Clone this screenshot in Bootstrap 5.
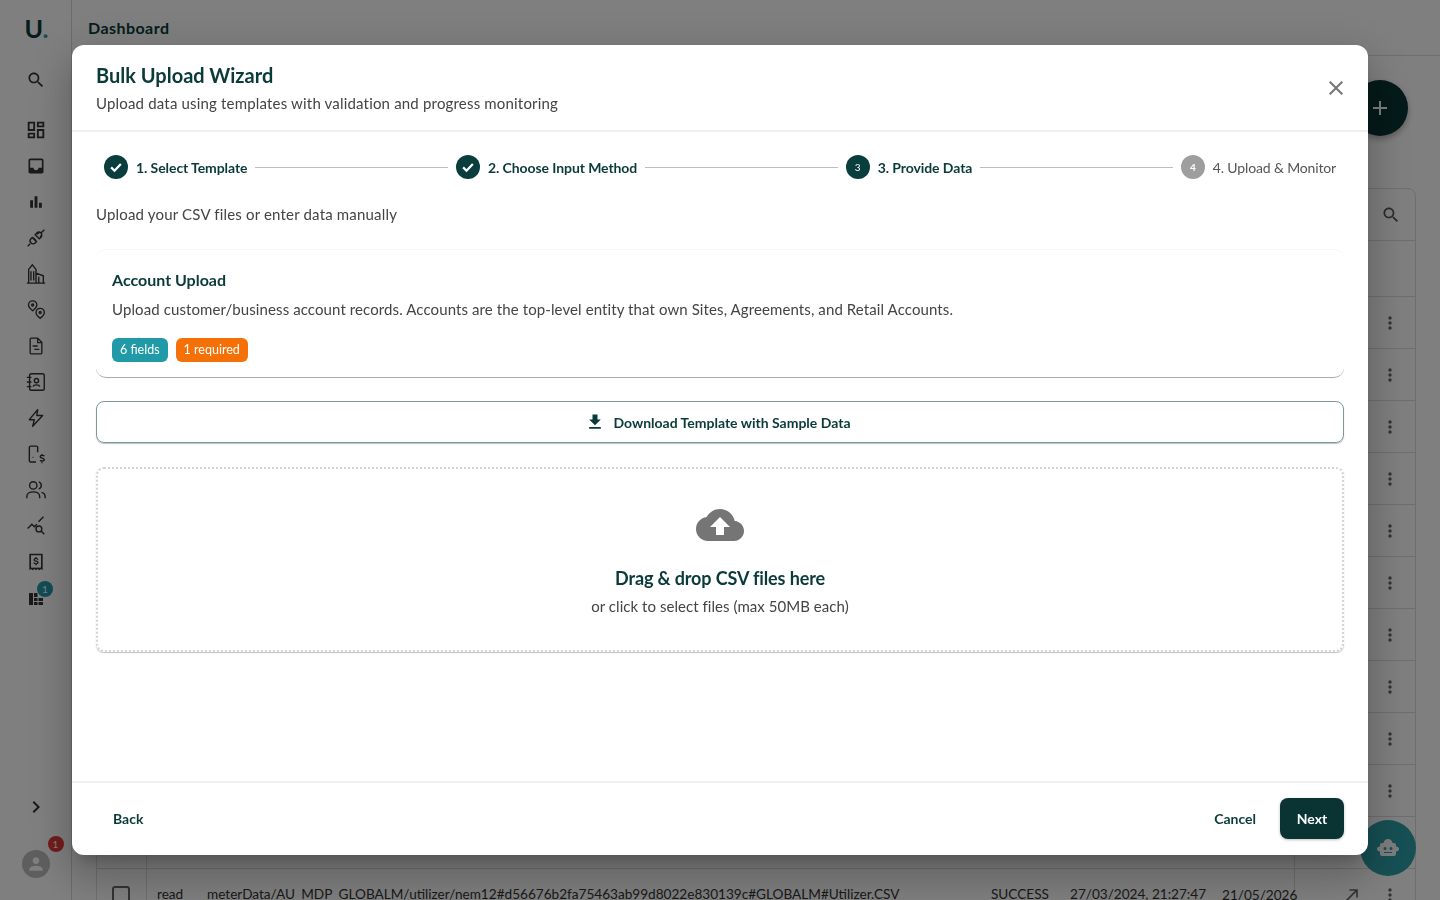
<!DOCTYPE html>
<html lang="en">

<head>
    <meta charset="UTF-8">
    <meta name="viewport" content="width=device-width, initial-scale=1.0">
    <title>Bulk Upload Wizard</title>

    <link href="https://cdn.jsdelivr.net/npm/bootstrap@5.3.0/dist/css/bootstrap.min.css" rel="stylesheet">
    <style>
        html, body { height: 100%; overflow: hidden; }
        body { font-family: "Lato", "Liberation Sans", sans-serif; color: #3f3f3f; background: #fff; font-size: 15px; }
        svg { fill: currentColor; display: block; flex: none; }

        /* page behind the dialog */
        .side-rail { width: 72px; height: 900px; flex: none; border-right: 1px solid #d8d8d8; color: #333; }
        .rail-logo { height: 56px; padding-left: 2px; font-size: 25px; font-weight: 700; color: #0a3a3a; line-height: 56px; }
        .rail-logo span { color: #2a9aa0; }
        .rail-btn { height: 36px; position: relative; }
        .rail-search { height: 24px; margin: 14px 0 18px; }
        .rail-foot { margin-top: auto; padding-bottom: 22px; }
        .rail-count { position: absolute; top: 1px; left: 37px; width: 16px; height: 16px; border-radius: 50%; background: #1f9aa6; color: #fff; font-size: 10px; line-height: 16px; text-align: center; }
        .user-dot { width: 28px; height: 28px; border-radius: 50%; background: #bdbdbd; color: #fff; position: relative; margin: 31px auto 0; }
        .user-count { position: absolute; top: -14px; left: 26px; width: 16px; height: 16px; border-radius: 50%; background: #e53935; color: #fff; font-size: 10px; line-height: 16px; text-align: center; }
        .page-main { min-width: 0; position: relative; }
        .page-head { height: 56px; padding: 0 16px; border-bottom: 1px solid #ddd; font-size: 16px; font-weight: 700; letter-spacing: .45px; color: #0a3a3a; }
        .fab-add { position: absolute; top: 80px; left: 1280px; width: 56px; height: 56px; border-radius: 50%; background: #0a3434; color: #fff; box-shadow: 0 3px 6px rgba(0,0,0,.3); }
        .fab-bot { position: fixed; top: 820px; left: 1360px; width: 56px; height: 56px; border-radius: 50%; background: #2ea3ab; color: #fff; z-index: 10; }
        .data-panel { margin: 132px 0 0 24px; width: 1320px; border: 1px solid #ddd; border-radius: 8px 8px 0 0; }
        .panel-tools { height: 52px; padding-right: 14px; color: #555; border-bottom: 1px solid #ddd; }
        .panel-cols { height: 56px; border-bottom: 1px solid #ddd; }
        .data-row { height: 52px; border-bottom: 1px solid #ddd; color: #333; font-size: 13.6px; white-space: nowrap; }
        .data-row > div { flex: none; }
        .cell-check { width: 50px; height: 100%; border-right: 1px solid #ddd; }
        .check-box { width: 18px; height: 18px; border: 2px solid #666; border-radius: 3px; margin: 17px 0 0 15px; }
        .cell-type { width: 50px; margin-left: 10px; }
        .cell-path { width: 784px; overflow: hidden; }
        .cell-state { width: 79px; }
        .cell-date { width: 152px; }
        .cell-date-end { width: 73px; height: 100%; line-height: 52px; border-right: 1px solid #ddd; }
        .cell-open { width: 67px; padding-left: 47px; color: #666; }
        .cell-more { margin-left: 18px; color: #666; }

        /* dialog */
        .wizard-dialog { width: 1296px; max-width: 1296px; margin: 45px auto 0; }
        .wizard-dialog .modal-content { height: 810px; border: 0; border-radius: 12px; box-shadow: 0 11px 15px -7px rgba(0,0,0,.2), 0 24px 38px 3px rgba(0,0,0,.14), 0 9px 46px 8px rgba(0,0,0,.12); }
        .wizard-head { height: 87px; padding: 18px 24px 0; border-bottom: 2px solid #f0f0f0; align-items: flex-start; }
        .wizard-title { font-size: 20px; font-weight: 700; line-height: 24px; color: #0a3a3a; margin: 0 0 5px; }
        .wizard-sub { font-size: 15px; line-height: 22px; letter-spacing: .18px; color: #444; margin: 0; }
        .wizard-close { border: 0; background: none; padding: 0; color: #757575; position: absolute; top: 31px; right: 20px; }
        .wizard-body { padding: 23px 24px 0; overflow: hidden; }
        .step-item { padding: 0 8px; font-size: 14px; font-weight: 700; letter-spacing: -.08px; color: #0a3a3a; white-space: nowrap; }
        .step-item.step-todo { color: #555; font-weight: 400; letter-spacing: -.15px; }
        .step-dot { width: 24px; height: 24px; border-radius: 50%; background: #0a3d3d; color: #fff; font-size: 10px; font-weight: 400; }
        .step-dot svg { fill: none; stroke: #fff; stroke-width: 3; }
        .step-todo .step-dot { background: #9e9e9e; font-weight: 700; }
        .step-line { height: 1px; background: #bdbdbd; }
        .wizard-lead { margin: 24px 0 24px; line-height: 22px; letter-spacing: .18px; color: #444; }
        .tpl-card { height: 129px; padding: 19px 16px 0; border-radius: 10px; border-bottom: 1px solid #a3adad; border-top: 1px solid #f6f6f6; box-shadow: 0 0 1px rgba(0,0,0,.05); }
        .tpl-name { font-size: 16px; font-weight: 700; line-height: 22px; color: #0a3a3a; margin: 0 0 7px; }
        .tpl-text { line-height: 22px; letter-spacing: .1px; color: #444; margin: 0 0 18px; }
        .tpl-tag { height: 24px; padding: 0 8px; border-radius: 6px; color: #fff; font-size: 12.5px; font-weight: 400; line-height: 24px; }
        .tag-fields { background: #1f9aa6; }
        .tag-required { background: #f57107; }
        .get-template { height: 42px; margin-top: 23px; padding-right: 16px; border: 1px solid #7f9797; border-radius: 8px; color: #0a3a3a; font-size: 14px; font-weight: 700; box-shadow: 0 1px 1px rgba(90,120,120,.45); }
        .get-template:hover { color: #0a3a3a; border-color: #7f9797; }
        .drop-zone { height: 185px; margin-top: 24px; padding-bottom: 2px; border: 2px dotted #d4d4d4; border-radius: 8px; color: #757575; box-shadow: 0 1px 1px rgba(0,0,0,.25); }
        .drop-title { font-size: 18px; font-weight: 700; line-height: 24px; letter-spacing: -.12px; color: #0a3a3a; margin: 17px 0 5px; }
        .drop-note { line-height: 22px; letter-spacing: .05px; color: #444; margin: 0; }
        .wizard-foot { height: 74px; padding: 0 24px 2px; border-top: 2px solid #f0f0f0; }
        .wizard-foot > * { margin: 0; }
        .foot-link { padding: 0 17px; font-size: 14px; font-weight: 700; color: #0a3a3a; border: 0; }
        .foot-link:hover { color: #0a3a3a; }
        .foot-next { height: 41px; width: 64px; padding: 0; margin-left: 7px; border-radius: 8px; border: 0; background: #0a3434; color: #fff; font-size: 14px; font-weight: 700; box-shadow: 0 1px 3px rgba(0,0,0,.25); }
        .foot-next:hover { background: #0a3434; color: #fff; }
    </style>
</head>

<body>
    <div class="d-flex">
        <!-- left rail -->
        <nav class="side-rail d-flex flex-column text-center">
            <div class="rail-logo">U<span>.</span></div>
            <div class="rail-search d-flex justify-content-center"><svg width="20" height="20" viewBox="0 0 24 24"><path d="M15.5 14h-.79l-.28-.27C15.41 12.59 16 11.11 16 9.5 16 5.91 13.09 3 9.5 3S3 5.91 3 9.5 5.91 16 9.5 16c1.61 0 3.09-.59 4.23-1.57l.27.28v.79l5 4.99L20.49 19l-4.99-5zm-6 0C7.01 14 5 11.99 5 9.5S7.01 5 9.5 5 14 7.01 14 9.5 11.99 14 9.5 14z"/></svg></div>
            <div class="rail-btn d-flex align-items-center justify-content-center"><svg width="22" height="22" viewBox="0 0 24 24"><path d="M19 5v2h-4V5h4M9 5v6H5V5h4m10 8v6h-4v-6h4M9 17v2H5v-2h4M21 3h-8v6h8V3zM11 3H3v10h8V3zm10 8h-8v10h8V11zm-10 4H3v6h8v-6z"/></svg></div>
            <div class="rail-btn d-flex align-items-center justify-content-center"><svg width="20" height="20" viewBox="0 0 24 24"><path d="M19 3H5c-1.1 0-2 .9-2 2v14c0 1.1.9 2 2 2h14c1.1 0 2-.9 2-2V5c0-1.1-.9-2-2-2zm0 2v9h-4c0 1.66-1.35 3-3 3s-3-1.34-3-3H5V5h14z"/></svg></div>
            <div class="rail-btn d-flex align-items-center justify-content-center"><svg width="20" height="20" viewBox="0 0 24 24"><path d="M5 10h3.4v9H5zM10.3 5h3.4v14h-3.4zM15.6 13H19v6h-3.4z"/></svg></div>
            <div class="rail-btn d-flex align-items-center justify-content-center"><svg width="20" height="20" viewBox="0 0 24 24" style="fill:none;stroke:currentColor;stroke-width:1.7"><path d="M2 22l3-3M8.5 11.5l4 4M6 13a3.5 3.5 0 1 0 5 5l1.5-1.5-5-5zM11 8l5 5 2-2a3.5 3.5 0 0 0-5-5zM18 6l4-4M13.5 7.5L16 5M17 10.5l2.5-2.5"/></svg></div>
            <div class="rail-btn d-flex align-items-center justify-content-center"><svg width="22" height="22" viewBox="0 0 24 24" style="fill:none;stroke:currentColor;stroke-width:1.5"><path d="M2 22h20M4 22V7l4-5 4 5v15M12 11l8 3v8M6.5 9v10M9.5 9v10M15 15v7"/></svg></div>
            <div class="rail-btn d-flex align-items-center justify-content-center"><svg width="20" height="20" viewBox="0 0 24 24" style="fill:none;stroke:currentColor;stroke-width:1.6"><path d="M8 13S3 8.8 3 6a5 5 0 0 1 10 0c0 2.8-5 7-5 7zM17 22s-5-4-5-7a5 5 0 0 1 10 0c0 3-5 7-5 7z"/><circle cx="8" cy="6" r="1.2"/><circle cx="17" cy="15" r="1.2"/></svg></div>
            <div class="rail-btn d-flex align-items-center justify-content-center"><svg width="20" height="20" viewBox="0 0 24 24" style="fill:none;stroke:currentColor;stroke-width:1.6"><path d="M6 2.5h8l5 5V20a1.5 1.5 0 0 1-1.5 1.5h-11A1.5 1.5 0 0 1 5 20V4a1.5 1.5 0 0 1 1-1.5zM14 3v5h5M8 12h6M10 16h6"/></svg></div>
            <div class="rail-btn d-flex align-items-center justify-content-center"><svg width="22" height="22" viewBox="0 0 24 24" style="fill:none;stroke:currentColor;stroke-width:1.5"><rect x="5" y="3" width="16" height="18" rx="2"/><path d="M2 7h5M2 12h5M2 17h5M9 17c.5-2.5 6.5-2.5 7 0"/><circle cx="12.5" cy="10.5" r="2.3"/></svg></div>
            <div class="rail-btn d-flex align-items-center justify-content-center"><svg width="20" height="20" viewBox="0 0 24 24" style="fill:none;stroke:currentColor;stroke-width:1.7;stroke-linejoin:round"><path d="M14 2L4 14h6l-2 8 12-13h-7z"/></svg></div>
            <div class="rail-btn d-flex align-items-center justify-content-center"><svg width="20" height="20" viewBox="0 0 24 24" style="fill:none;stroke:currentColor;stroke-width:1.7"><path d="M14 10V4a1.5 1.5 0 0 0-1.5-1.5h-7A1.5 1.5 0 0 0 4 4v16a1.5 1.5 0 0 0 1.5 1.5H12M8 16h1M19 12v1M19 22v1M22 14.5c-1-1.2-5-1.2-5 .8s5 1.3 5 3.4-4 2-5 .8"/></svg></div>
            <div class="rail-btn d-flex align-items-center justify-content-center"><svg width="22" height="22" viewBox="0 0 24 24" style="fill:none;stroke:currentColor;stroke-width:1.5"><circle cx="9" cy="7" r="4"/><path d="M2 21v-2c0-3 3-5 7-5s7 2 7 5v2M15 3.2a4 4 0 0 1 0 7.6M18 14.5c2.4.7 4 2.3 4 4.5v2"/></svg></div>
            <div class="rail-btn d-flex align-items-center justify-content-center"><svg width="20" height="20" viewBox="0 0 24 24" style="fill:none;stroke:currentColor;stroke-width:1.7"><path d="M2 15l5-5 3 3 3-3M15 7l6-6"/><circle cx="15.5" cy="15.5" r="3.5"/><path d="M18 18l4 4"/></svg></div>
            <div class="rail-btn d-flex align-items-center justify-content-center"><svg width="20" height="20" viewBox="0 0 24 24"><path d="M4 2h16v20l-2-1.5-2 1.5-2-1.5-2 1.5-2-1.5L8 22l-2-1.5L4 22zm2 2v14.5l2 .5 2-.5 2 .5 2-.5 2 .5 2-.5V4z"/><path d="M11.2 6h1.6v1.3c1.2.2 2 .9 2.2 2h-1.6c-.2-.5-.6-.8-1.4-.8s-1.3.3-1.3.8c0 .5.5.7 1.700 1 1.500.4 2.800.9 2.800 2.400 0 1.100-.9 1.900-2.400 2.100V16h-1.600v-1.200c-1.300-.2-2.300-1-2.400-2.200h1.600c.1.600.7 1 1.600 1 1 0 1.500-.4 1.500-.9 0-.6-.6-.8-1.800-1.100-1.400-.4-2.700-.9-2.700-2.300 0-1.100.9-1.800 2.200-2z"/></svg></div>
            <div class="rail-btn d-flex align-items-center justify-content-center"><svg width="18" height="18" viewBox="0 0 18 18"><path d="M2 4h4v12H2zM7 4h3.500v4H7zM7 9h3.500v3H7zM7 13h3.500v3H7zM11.500 9H16v3h-4.500zM11.500 13H16v3h-4.500z"/></svg><span class="rail-count">1</span></div>
            <div class="rail-foot">
                <div class="d-flex justify-content-center"><svg width="24" height="24" viewBox="0 0 24 24"><path d="M10 6L8.59 7.41 13.17 12l-4.58 4.59L10 18l6-6z"/></svg></div>
                <div class="user-dot d-flex align-items-center justify-content-center"><svg width="20" height="20" viewBox="0 0 24 24"><path d="M12 12c2.21 0 4-1.79 4-4s-1.79-4-4-4-4 1.79-4 4 1.79 4 4 4zm0 2c-2.67 0-8 1.34-8 4v2h16v-2c0-2.66-5.33-4-8-4z"/></svg><span class="user-count">1</span></div>
            </div>
        </nav>

        <!-- page content, dimmed by the backdrop -->
        <main class="page-main flex-grow-1">
            <div class="page-head d-flex align-items-center">Dashboard</div>
            <div class="fab-add d-flex align-items-center justify-content-center"><svg width="24" height="24" viewBox="0 0 24 24"><path d="M19 13h-6v6h-2v-6H5v-2h6V5h2v6h6v2z"/></svg></div>
            <div class="data-panel">
                <div class="panel-tools d-flex align-items-center justify-content-end"><svg width="20" height="20" viewBox="0 0 24 24"><path d="M15.5 14h-.79l-.28-.27C15.41 12.59 16 11.11 16 9.5 16 5.91 13.09 3 9.5 3S3 5.91 3 9.5 5.91 16 9.5 16c1.61 0 3.09-.59 4.23-1.57l.27.28v.79l5 4.99L20.49 19l-4.99-5zm-6 0C7.01 14 5 11.99 5 9.5S7.01 5 9.5 5 14 7.01 14 9.5 11.99 14 9.5 14z"/></svg></div>
                <div class="panel-cols"></div>
                <div id="rows"></div>
            </div>
        </main>
    </div>
    <div class="fab-bot d-flex align-items-center justify-content-center"><svg width="24" height="24" viewBox="0 0 24 24"><path d="M20 10.5V9c0-1.1-.9-2-2-2h-1.500C16 4.500 14.300 3 12 3S8 4.500 7.500 7H6c-1.100 0-2 .9-2 2v1.500c-1.660 0-3 .9-3 2.500s1.340 2.500 3 2.500V18c0 1.100.9 2 2 2h12c1.100 0 2-.9 2-2v-2.500c1.660 0 3-.9 3-2.500s-1.340-2.500-3-2.500zM9 14a1.500 1.500 0 1 1 0-3 1.500 1.500 0 0 1 0 3zm7 3H8v-1h8zm-1-3a1.500 1.500 0 1 1 0-3 1.500 1.500 0 0 1 0 3z"/></svg></div>

    <div class="modal-backdrop show"></div>

    <!-- wizard dialog -->
    <div class="modal d-block" tabindex="-1">
        <div class="modal-dialog wizard-dialog">
            <div class="modal-content">
                <div class="modal-header wizard-head d-block">
                    <h5 class="wizard-title">Bulk Upload Wizard</h5>
                    <p class="wizard-sub">Upload data using templates with validation and progress monitoring</p>
                    <button type="button" class="wizard-close" aria-label="Close"><svg width="24" height="24" viewBox="0 0 24 24"><path d="M19 6.41L17.59 5 12 10.59 6.41 5 5 6.41 10.59 12 5 17.59 6.41 19 12 13.41 17.59 19 19 17.59 13.41 12z"/></svg></button>
                </div>
                <div class="modal-body wizard-body">
                    <div class="d-flex align-items-center">
                        <div class="step-item d-flex align-items-center gap-2"><span class="step-dot d-flex align-items-center justify-content-center"><svg width="18" height="18" viewBox="0 0 24 24"><path d="M5.5 12.5l4.5 4.5 8.5-9"/></svg></span>1. Select Template</div>
                        <div class="step-line flex-grow-1"></div>
                        <div class="step-item d-flex align-items-center gap-2"><span class="step-dot d-flex align-items-center justify-content-center"><svg width="18" height="18" viewBox="0 0 24 24"><path d="M5.5 12.5l4.5 4.5 8.5-9"/></svg></span>2. Choose Input Method</div>
                        <div class="step-line flex-grow-1"></div>
                        <div class="step-item d-flex align-items-center gap-2"><span class="step-dot d-flex align-items-center justify-content-center">3</span>3. Provide Data</div>
                        <div class="step-line flex-grow-1"></div>
                        <div class="step-item step-todo d-flex align-items-center gap-2"><span class="step-dot d-flex align-items-center justify-content-center">4</span>4. Upload &amp; Monitor</div>
                    </div>
                    <p class="wizard-lead">Upload your CSV files or enter data manually</p>
                    <div class="tpl-card">
                        <h6 class="tpl-name">Account Upload</h6>
                        <p class="tpl-text">Upload customer/business account records. Accounts are the top-level entity that own Sites, Agreements, and Retail Accounts.</p>
                        <div class="d-flex gap-2">
                            <span class="tpl-tag tag-fields">6 fields</span>
                            <span class="tpl-tag tag-required">1 required</span>
                        </div>
                    </div>
                    <button type="button" class="btn get-template w-100 d-flex align-items-center justify-content-center gap-2"><svg width="20" height="20" viewBox="0 0 24 24"><path d="M19 9h-4V3H9v6H5l7 7 7-7zM5 18v2h14v-2H5z"/></svg>Download Template with Sample Data</button>
                    <div class="drop-zone d-flex flex-column align-items-center justify-content-center">
                        <svg width="48" height="48" viewBox="0 0 24 24"><path d="M19.35 10.04C18.67 6.59 15.64 4 12 4 9.11 4 6.6 5.64 5.35 8.04 2.34 8.36 0 10.91 0 14c0 3.31 2.69 6 6 6h13c2.76 0 5-2.24 5-5 0-2.64-2.05-4.78-4.65-4.96zM14 13v4h-4v-4H7l5-5 5 5h-3z"/></svg>
                        <h6 class="drop-title">Drag &amp; drop CSV files here</h6>
                        <p class="drop-note">or click to select files (max 50MB each)</p>
                    </div>
                </div>
                <div class="modal-footer wizard-foot d-flex align-items-center justify-content-between">
                    <button type="button" class="btn foot-link">Back</button>
                    <div class="d-flex align-items-center">
                        <button type="button" class="btn foot-link">Cancel</button>
                        <button type="button" class="btn foot-next">Next</button>
                    </div>
                </div>
            </div>
        </div>
    </div>

    <script src="https://cdn.jsdelivr.net/npm/bootstrap@5.3.0/dist/js/bootstrap.bundle.min.js"></script>
    <script>
        // table rows behind the dialog, only the right edge and last row show
        let html = "";
        for (let i = 0; i < 12; i++) {
            html += '<div class="data-row d-flex align-items-center">' +
                '<div class="cell-check"><div class="check-box"></div></div>' +
                '<div class="cell-type">read</div>' +
                '<div class="cell-path">meterData/AU_MDP_GLOBALM/utilizer/nem12#d56676b2fa75463ab99d8022e830139c#GLOBALM#Utilizer.CSV</div>' +
                '<div class="cell-state">SUCCESS</div>' +
                '<div class="cell-date">27/03/2024, 21:27:47</div>' +
                '<div class="cell-date-end">21/05/2026</div>' +
                '<div class="cell-open"><svg width="20" height="20" viewBox="0 0 24 24"><path d="M9 5v2h6.59L4 18.59 5.41 20 17 8.41V15h2V5z"/></svg></div>' +
                '<div class="cell-more"><svg width="20" height="20" viewBox="0 0 24 24"><path d="M12 8c1.1 0 2-.9 2-2s-.9-2-2-2-2 .9-2 2 .9 2 2 2zm0 2c-1.1 0-2 .9-2 2s.9 2 2 2 2-.9 2-2-.9-2-2-2zm0 6c-1.1 0-2 .9-2 2s.9 2 2 2 2-.9 2-2-.9-2-2-2z"/></svg></div>' +
                '</div>';
        }
        document.getElementById("rows").innerHTML = html;
    </script>
</body>

</html>
